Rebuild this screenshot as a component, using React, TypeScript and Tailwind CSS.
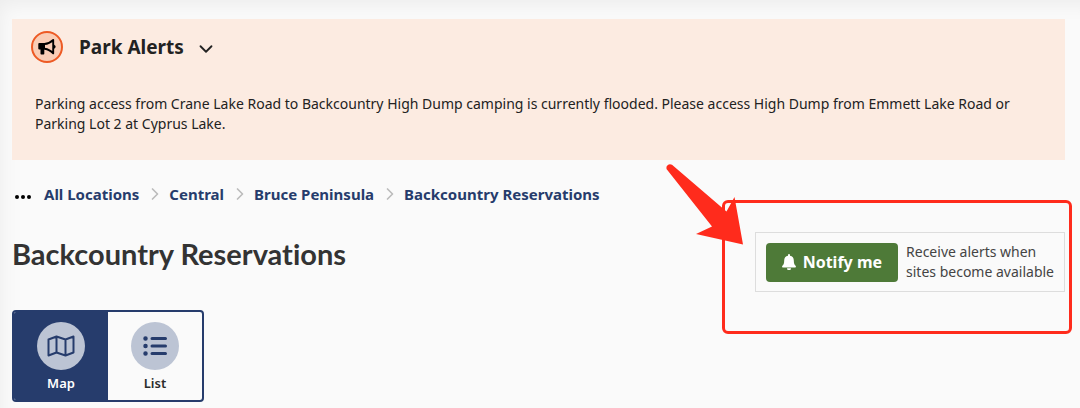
import React, { useState } from 'react';
import { ChevronDown, ChevronRight } from 'lucide-react';

const crumbs = ["All Locations", "Central", "Bruce Peninsula", "Backcountry Reservations"];

function MegaphoneIcon() {
  return (
    <svg viewBox="0 0 18 18" className="size-[18px]" fill="none" aria-hidden="true">
      <path d="M1.200 5h5.800v6.500H6.300v4.200a.8.8 0 0 1-.8.8H3.300a.8.8 0 0 1-.8-.8v-4.200H1.200a.9.9 0 0 1-.9-.9V5.900a.9.9 0 0 1 .9-.9z" fill="#000" />
      <path d="M6.500 6c3.300-.2 6.300-1.700 8.700-4v13.400c-2.300-2.600-5.200-4.100-8.700-4.600" stroke="#000" strokeWidth="1.900" strokeLinejoin="round" />
      <path d="M15.600 7a1.700 1.700 0 0 1 0 3.400z" fill="#000" stroke="#000" strokeWidth=".6" />
    </svg>
  );
}

function MapIcon() {
  return (
    <svg viewBox="0 0 28 24" className="h-6 w-7" fill="none" stroke="#263c6c" strokeWidth="2" strokeLinejoin="round" aria-hidden="true">
      <path d="M1.500 5.500 9.500 2.500l9 3 8-3v16L18.500 21.500l-9-3-8 3zM9.500 2.500v16M18.500 5.500v16" />
    </svg>
  );
}

function ListIcon() {
  return (
    <svg viewBox="0 0 24 20" className="h-5 w-6" stroke="#263c6c" strokeLinecap="round" aria-hidden="true">
      <path d="M9 2.500h13.500M9 10h13.500M9 17.500h13.500" strokeWidth="3" />
      <path d="M2.500 2.500h.01M2.500 10h.01M2.500 17.500h.01" strokeWidth="4.500" />
    </svg>
  );
}

function BellIcon() {
  return (
    <svg viewBox="0 0 14 16" className="h-4 w-[14px]" fill="#fff" aria-hidden="true">
      <path d="M7 0a1 1 0 0 1 1 1v.7A4.800 4.800 0 0 1 11.800 6.400c0 3.200.7 4.200 1.800 5.300.7.800.2 1.800-.7 1.800H1.100c-.9 0-1.400-1-.7-1.800C1.500 10.600 2.200 9.600 2.200 6.400A4.800 4.800 0 0 1 6 1.700V1a1 1 0 0 1 1-1zM5 14.200h4a2 2 0 0 1-4 0z" />
    </svg>
  );
}

export default function App() {
  const [open, setOpen] = useState(true);
  const [view, setView] = useState("map");

  const tab = (name: string) =>
    view === name
      ? "flex w-[94px] flex-col items-center gap-[2px] bg-[#263c6c] pt-[10px] pb-[6px] text-white"
      : "flex w-[94px] flex-col items-center gap-[2px] pt-[10px] pb-[6px] text-[#2b2b2b]";

  return (
    <div className="min-h-screen overflow-hidden bg-[#fafafa] pt-[19px] pr-[15px] pb-[5px] pl-3 font-['Noto_Sans',sans-serif] shadow-[inset_10px_14px_20px_-10px_rgba(0,0,0,0.06)]">
      {/* Alerts */}
      <section className="bg-[#fcebe1] px-[19px] pt-3 pb-[26px] text-[#222]">
        <button type="button" onClick={() => setOpen(!open)} aria-expanded={open} className="flex items-center">
          <span className="flex size-8 items-center justify-center rounded-full border-2 border-[#ed5a24] bg-[#f9cdb6]">
            <MegaphoneIcon />
          </span>
          <span className="ml-4 text-[19px] leading-8 font-bold">Park Alerts</span>
          <ChevronDown className="mt-1 ml-[11px] size-[22px]" />
        </button>
        {open && (
          <p className="mt-[31px] pl-1 text-sm leading-5">
            Parking access from Crane Lake Road to Backcountry High Dump camping is currently flooded. Please access High Dump from Emmett Lake Road or Parking Lot 2 at Cyprus Lake.
          </p>
        )}
      </section>

      {/* Breadcrumbs */}
      <nav aria-label="Breadcrumb" className="mt-[22px] flex items-center">
        <button type="button" aria-label="More locations" className="mr-[13px] ml-[3px]">
          <svg viewBox="0 0 16 6" className="mt-[6px] h-[6px] w-4" fill="#000" aria-hidden="true">
            <circle cx="2" cy="3" r="2" />
            <circle cx="8" cy="3" r="2" />
            <circle cx="14" cy="3" r="2" />
          </svg>
        </button>
        <ol className="flex items-center">
          {crumbs.map((crumb, i) => (
            <li key={crumb} className="flex items-center">
              {i > 0 && <ChevronRight className="mr-1 ml-[6px] size-5 text-[#bbb]" />}
              <a href="#" className="text-[15px] leading-6 font-bold text-[#263c6c]">{crumb}</a>
            </li>
          ))}
        </ol>
      </nav>

      <div className="mt-[26px] flex items-start justify-between">
        <h1 className="mt-1 font-['Lato',sans-serif] text-[29px] leading-9 font-bold text-[#333] [font-variant-ligatures:none]">Backcountry Reservations</h1>
        <div className="relative flex items-center gap-2 border border-[#ddd] px-[10px] py-[9px]">
          <button type="button" className="flex h-[39px] items-center gap-[7px] rounded bg-[#4e7a38] px-4 text-base font-bold text-white">
            <BellIcon />
            Notify me
          </button>
          <p className="text-sm leading-5 text-[#444]">
            Receive alerts when
            <br />
            sites become available
          </p>

          {/* Highlight */}
          <div className="pointer-events-none absolute -top-[33px] -right-2 -bottom-[43px] -left-[34px] rounded-md border-3 border-[#ff2b1c]" />
          <svg viewBox="0 0 80 84" className="pointer-events-none absolute -top-[71px] -left-[91px] h-[84px] w-20" fill="#ff2b1c" aria-hidden="true">
            <path d="M1.500 7A3.700 3.700 0 0 1 7 2.800L61.500 49.500 69.500 35 78 82.500 31 72 47 64.500z" />
          </svg>
        </div>
      </div>

      {/* View switch */}
      <div className="mt-[18px] flex w-fit overflow-hidden rounded border-2 border-[#263c6c] text-[13px] leading-[22px] font-semibold">
        <button type="button" aria-pressed={view === "map"} onClick={() => setView("map")} className={tab("map")}>
          <span className="flex size-12 items-center justify-center rounded-full bg-[#bcc4d4]"><MapIcon /></span>
          Map
        </button>
        <button type="button" aria-pressed={view === "list"} onClick={() => setView("list")} className={tab("list")}>
          <span className="flex size-12 items-center justify-center rounded-full bg-[#bcc4d4]"><ListIcon /></span>
          List
        </button>
      </div>
    </div>
  );
}
